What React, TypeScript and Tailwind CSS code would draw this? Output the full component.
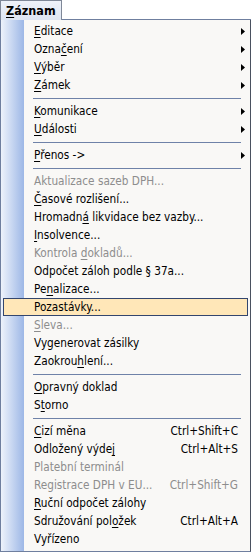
import React from "react";

type Item =
  | { sep: true }
  | {
      sep?: false;
      label: string;
      u?: number;
      disabled?: boolean;
      sub?: boolean;
      key?: string;
      hot?: boolean;
    };

const items: Item[] = [
  { label: "Editace", u: 0, sub: true },
  { label: "Označení", u: 4, sub: true },
  { label: "Výběr", u: 0, sub: true },
  { label: "Zámek", u: 0, sub: true },
  { sep: true },
  { label: "Komunikace", u: 0, sub: true },
  { label: "Události", u: 0, sub: true },
  { sep: true },
  { label: "Přenos ->", u: 0, sub: true },
  { sep: true },
  { label: "Aktualizace sazeb DPH...", disabled: true },
  { label: "Časové rozlišení...", u: 0 },
  { label: "Hromadná likvidace bez vazby...", u: 7 },
  { label: "Insolvence...", u: 0 },
  { label: "Kontrola dokladů...", u: 9, disabled: true },
  { label: "Odpočet záloh podle § 37a..." },
  { label: "Penalizace...", u: 2 },
  { label: "Pozastávky...", hot: true },
  { label: "Sleva...", u: 0, disabled: true },
  { label: "Vygenerovat zásilky" },
  { label: "Zaokrouhlení...", u: 7 },
  { sep: true },
  { label: "Opravný doklad", u: 0 },
  { label: "Storno", u: 1 },
  { sep: true },
  { label: "Cizí měna", u: 0, key: "Ctrl+Shift+C" },
  { label: "Odložený výdej", u: 13, key: "Ctrl+Alt+S" },
  { label: "Platební terminál", disabled: true },
  { label: "Registrace DPH v EU...", disabled: true, key: "Ctrl+Shift+G" },
  { label: "Ruční odpočet zálohy", u: 0 },
  { label: "Sdružování položek", u: 14, key: "Ctrl+Alt+A" },
  { label: "Vyřízeno" },
];

const Label = ({ text, u }: { text: string; u?: number }) => {
  if (u === undefined) return <span>{text}</span>;
  return (
    <span>
      {text.slice(0, u)}
      <span className="underline underline-offset-2">{text[u]}</span>
      {text.slice(u + 1)}
    </span>
  );
};

const Arrow = () => (
  <svg width="4" height="7" viewBox="0 0 4 7" className="mr-[1px]">
    <polygon points="0,0 4,3.5 0,7" fill="#000" />
  </svg>
);

export default function App() {
  return (
    <div
      className="w-[251px] h-[552px] bg-white text-[11.7px] leading-none text-black"
      style={{ fontFamily: '"DejaVu Sans Condensed", Tahoma, "DejaVu Sans", sans-serif' }}
    >
      <div className="flex h-[20px]">
        <div className="w-[62px] h-[20px] border-t border-l border-r border-[#7f8898] bg-[linear-gradient(to_bottom,#eef2f9,#dde5f2)] flex items-center pl-[5px] pt-[1px] font-bold text-[12.5px]">
          <span>
            <span className="underline underline-offset-2">Z</span>áznam
          </span>
        </div>
        <div className="flex-1 border-b border-[#6f7f9f]" />
      </div>
      <div className="h-[532px] border-l border-r border-b border-[#6f7f9f] border-r-[#4a5160] py-[2px] bg-[linear-gradient(to_right,#eef3fb_0px,#9db7e6_23px,#f9f8f6_23px)]">
        {items.map((it, i) =>
          it.sep ? (
            <div key={i} className="h-[8px] flex items-center pl-[32px] pr-[9px]">
              <div className="h-[1px] w-full bg-[#6f82a8]" />
            </div>
          ) : (
            <div
              key={i}
              className={
                "h-[18px] mx-[2px] border flex items-center pl-[30px] pr-[1px] " +
                (it.hot ? "border-[#33466e] bg-[#ffe7b8] " : "border-transparent ") +
                (it.disabled ? "text-[#8d8d8d]" : "text-black")
              }
            >
              <div className="flex-1 whitespace-nowrap pt-[2px]">
                <Label text={it.label} u={it.u} />
              </div>
              {it.key && <div className="whitespace-nowrap pr-[8px] pt-[2px]">{it.key}</div>}
              {it.sub && <Arrow />}
            </div>
          )
        )}
      </div>
    </div>
  );
}
